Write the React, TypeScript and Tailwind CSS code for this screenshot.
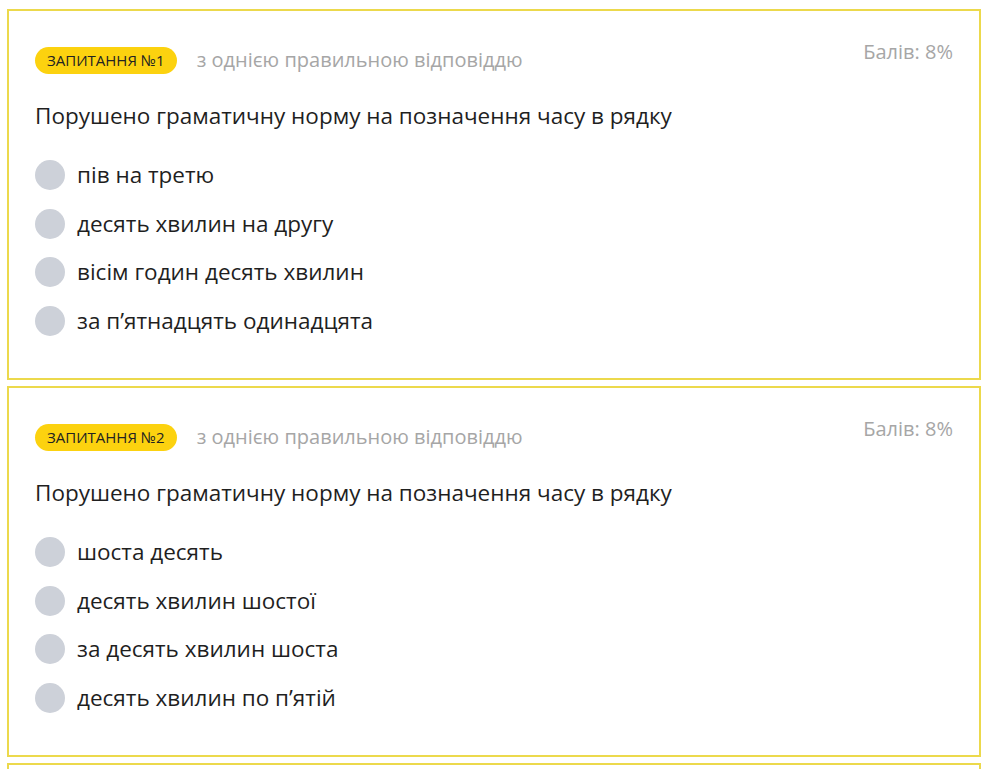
import React from 'react';

type Question = {
  id: number;
  title: string;
  options: string[];
};

const questions: Question[] = [
  {
    id: 1,
    title: 'Порушено граматичну норму на позначення часу в рядку',
    options: ['пів на третю', 'десять хвилин на другу', 'вісім годин десять хвилин', 'за п’ятнадцять одинадцята'],
  },
  {
    id: 2,
    title: 'Порушено граматичну норму на позначення часу в рядку',
    options: ['шоста десять', 'десять хвилин шостої', 'за десять хвилин шоста', 'десять хвилин по п’ятій'],
  },
];

const QuestionCard: React.FC<{ q: Question }> = ({ q }) => {
  return (
    <div className="border-2 border-[#ecd94c] bg-white pt-[34px] pl-[26px] pr-[26px] h-[371px]">
      {/* Header */}
      <div className="flex items-start justify-between">
        <div className="flex items-center gap-5">
          <span className="h-[27px] px-3 rounded-full bg-[#fcd20f] text-[#222] text-[15px] flex items-center">
            ЗАПИТАННЯ №{q.id}
          </span>
          <span className="text-[20px] text-[#a6a6a6]">з однією правильною відповіддю</span>
        </div>
        <span className="text-[20px] text-[#a6a6a6] -mt-[8px]">Балів: 8%</span>
      </div>

      {/* Question */}
      <p className="mt-[26px] text-[22.5px] leading-[30px] text-[#1f1f1f]">{q.title}</p>

      {/* Options */}
      <ul className="mt-[29px] flex flex-col gap-[18.5px]">
        {q.options.map((option, index) => (
          <li key={`${q.id}-option-${index}`} className="flex items-center gap-[12px]">
            <span className="w-[30px] h-[30px] rounded-full bg-[#cdd1d9] shrink-0" />
            <span className="text-[22.5px] leading-[30px] text-[#1f1f1f]">{option}</span>
          </li>
        ))}
      </ul>
    </div>
  );
};

const App: React.FC = () => {
  return (
    <div className="bg-white pt-[9px] pl-[7px] pr-[8px] font-['Open_Sans',sans-serif] overflow-hidden h-[769px]">
      <div className="flex flex-col gap-[6px]">
        {questions.map((q) => (
          <QuestionCard key={`question-${q.id}`} q={q} />
        ))}
        {/* next card, only its top edge is visible */}
        <div className="border-2 border-[#ecd94c] bg-white h-[371px]" />
      </div>
    </div>
  );
};

export default App;
